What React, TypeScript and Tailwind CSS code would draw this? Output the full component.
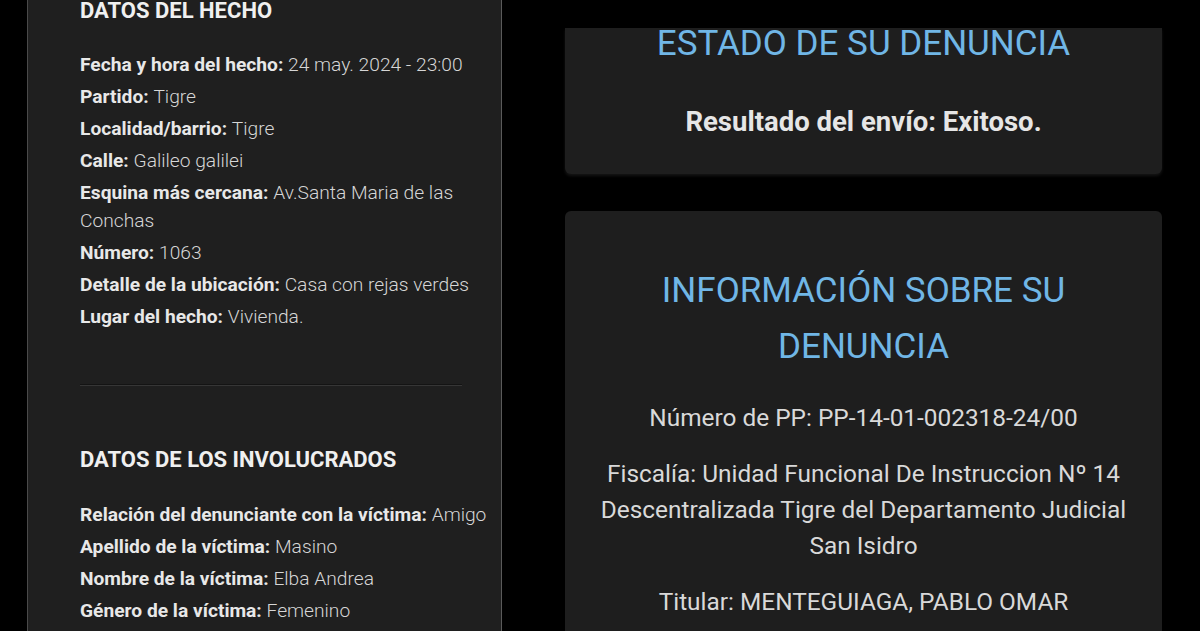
import React from "react";

const rowsHecho: [string, string][] = [
  ["Fecha y hora del hecho:", "24 may. 2024 - 23:00"],
  ["Partido:", "Tigre"],
  ["Localidad/barrio:", "Tigre"],
  ["Calle:", "Galileo galilei"],
  ["Esquina más cercana:", "Av.Santa Maria de las Conchas"],
  ["Número:", "1063"],
  ["Detalle de la ubicación:", "Casa con rejas verdes"],
  ["Lugar del hecho:", "Vivienda."],
];

const rowsInv: [string, string][] = [
  ["Relación del denunciante con la víctima:", "Amigo"],
  ["Apellido de la víctima:", "Masino"],
  ["Nombre de la víctima:", "Elba Andrea"],
  ["Género de la víctima:", "Femenino"],
];

function Row({ label, value }: { label: string; value: string }) {
  return (
    <p className="text-[19.2px] leading-[28px] text-[#e8e8e8]">
      <span className="font-bold">{label}</span>{" "}
      <span className="font-light text-[#d6d6d6]">{value}</span>
    </p>
  );
}

export default function App() {
  return (
    <div
      className="w-[1200px] h-[631px] overflow-hidden bg-black flex"
      style={{ fontFamily: "Roboto, 'Noto Sans', sans-serif" }}
    >
      {/* Left panel */}
      <div className="ml-[27px] w-[475px] h-full bg-[#1f1f1f] border-l border-l-[#4a4a4a] border-r border-r-[#5a5a5a] pl-[52px] pr-[20px] flex flex-col">
        <h2 className="-mt-[3px] text-[22px] leading-[28px] font-bold text-[#f0f0f0]">DATOS DEL HECHO</h2>
        <div className="mt-[26px] flex flex-col gap-[4px]">
          {rowsHecho.map(([l, v]) => (
            <Row key={l} label={l} value={v} />
          ))}
        </div>
        <div className="mt-[53px] mr-[19px] h-[2px] bg-[#363636] border-t border-t-[#141414]" />
        <h2 className="mt-[60px] text-[22px] leading-[28px] font-bold text-[#f0f0f0]">DATOS DE LOS INVOLUCRADOS</h2>
        <div className="mt-[27px] flex flex-col gap-[4px] -mr-[12px]">
          {rowsInv.map(([l, v]) => (
            <Row key={l} label={l} value={v} />
          ))}
        </div>
      </div>

      {/* Right side */}
      <div className="ml-[63px] w-[597px] flex flex-col">
        <div className="mt-[28px] h-[146px] bg-[#1e1e1e] rounded-b-[6px] shadow-[0_2px_3px_rgba(80,80,80,0.25)] flex flex-col items-center">
          <h2 className="text-[35px] leading-[32px] text-[#70b6e6]">ESTADO DE SU DENUNCIA</h2>
          <p className="mt-[44px] text-[27.5px] leading-[36px] font-bold text-[#e6e6e6]">
            Resultado del envío: Exitoso.
          </p>
        </div>

        <div className="mt-[37px] flex-1 bg-[#1e1e1e] rounded-t-[6px] pt-[52px] px-[10px] flex flex-col items-center text-center">
          <h2 className="text-[35px] leading-[56px] text-[#70b6e6]">
            INFORMACIÓN SOBRE SU
            <br />
            DENUNCIA
          </h2>
          <p className="mt-[25px] text-[24.4px] leading-[36px] text-[#d9d9d9]">
            Número de PP: PP-14-01-002318-24/00
          </p>
          <p className="mt-[20px] text-[24.4px] leading-[36px] text-[#d9d9d9]">
            Fiscalía: Unidad Funcional De Instruccion Nº 14
            <br />
            Descentralizada Tigre del Departamento Judicial
            <br />
            San Isidro
          </p>
          <p className="mt-[20px] text-[24.4px] leading-[36px] text-[#d9d9d9]">
            Titular: MENTEGUIAGA, PABLO OMAR
          </p>
        </div>
      </div>
    </div>
  );
}
